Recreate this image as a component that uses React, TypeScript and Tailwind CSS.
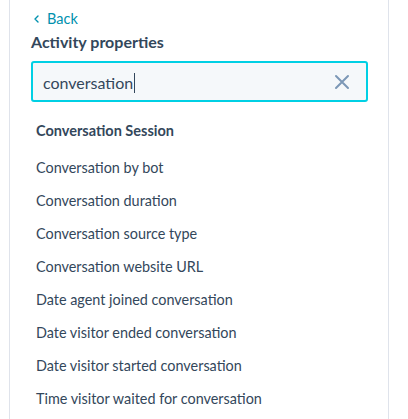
const items = [
  "Conversation by bot",
  "Conversation duration",
  "Conversation source type",
  "Conversation website URL",
  "Date agent joined conversation",
  "Date visitor ended conversation",
  "Date visitor started conversation",
  "Time visitor waited for conversation",
];

export default function App() {
  return (
    <div className="h-[419px] w-[408px] overflow-hidden bg-white font-['Lato',sans-serif] text-[#33475b]">
      <div className="ml-[9px] h-full w-[380px] border-x border-[#dfe3eb] pl-[21px] pr-[20px]">
        <div className="flex items-center gap-[8px] pt-[10px] pl-[3px] text-[14.5px] leading-[18px] text-[#0091ae]">
          <svg width="5" height="8" viewBox="0 0 5 8" fill="none" stroke="#0091ae" strokeWidth="1.4" strokeLinecap="round" strokeLinejoin="round">
            <path d="M4 1L1 4L4 7" />
          </svg>
          <span>Back</span>
        </div>
        <div className="mt-[4px] text-[16px] font-bold leading-[20px]">Activity properties</div>
        <div className="mt-[9px] flex h-[41px] items-center rounded-[3px] border-2 border-[#00d0e4] bg-[#f5f8fa] pl-[10px] pr-[16px]">
          <span className="flex-1 text-[16px]">
            conversation<span className="ml-[1px] inline-block h-[20px] w-[1px] translate-y-[4px] bg-[#33475b]" />
          </span>
          <svg width="16" height="16" viewBox="0 0 16 16" fill="none" stroke="#7c98b6" strokeWidth="2" strokeLinecap="round">
            <path d="M2 2L14 14M14 2L2 14" />
          </svg>
        </div>
        <div className="pl-[5px] pt-[17px]">
          <div className="h-[24px] text-[14.5px] font-bold leading-[24px]">Conversation Session</div>
          <div className="mt-[16px] flex flex-col">
            {items.map((item) => (
              <div key={item} className="h-[33px] text-[14.4px] leading-[17px]">{item}</div>
            ))}
          </div>
        </div>
      </div>
    </div>
  );
}
